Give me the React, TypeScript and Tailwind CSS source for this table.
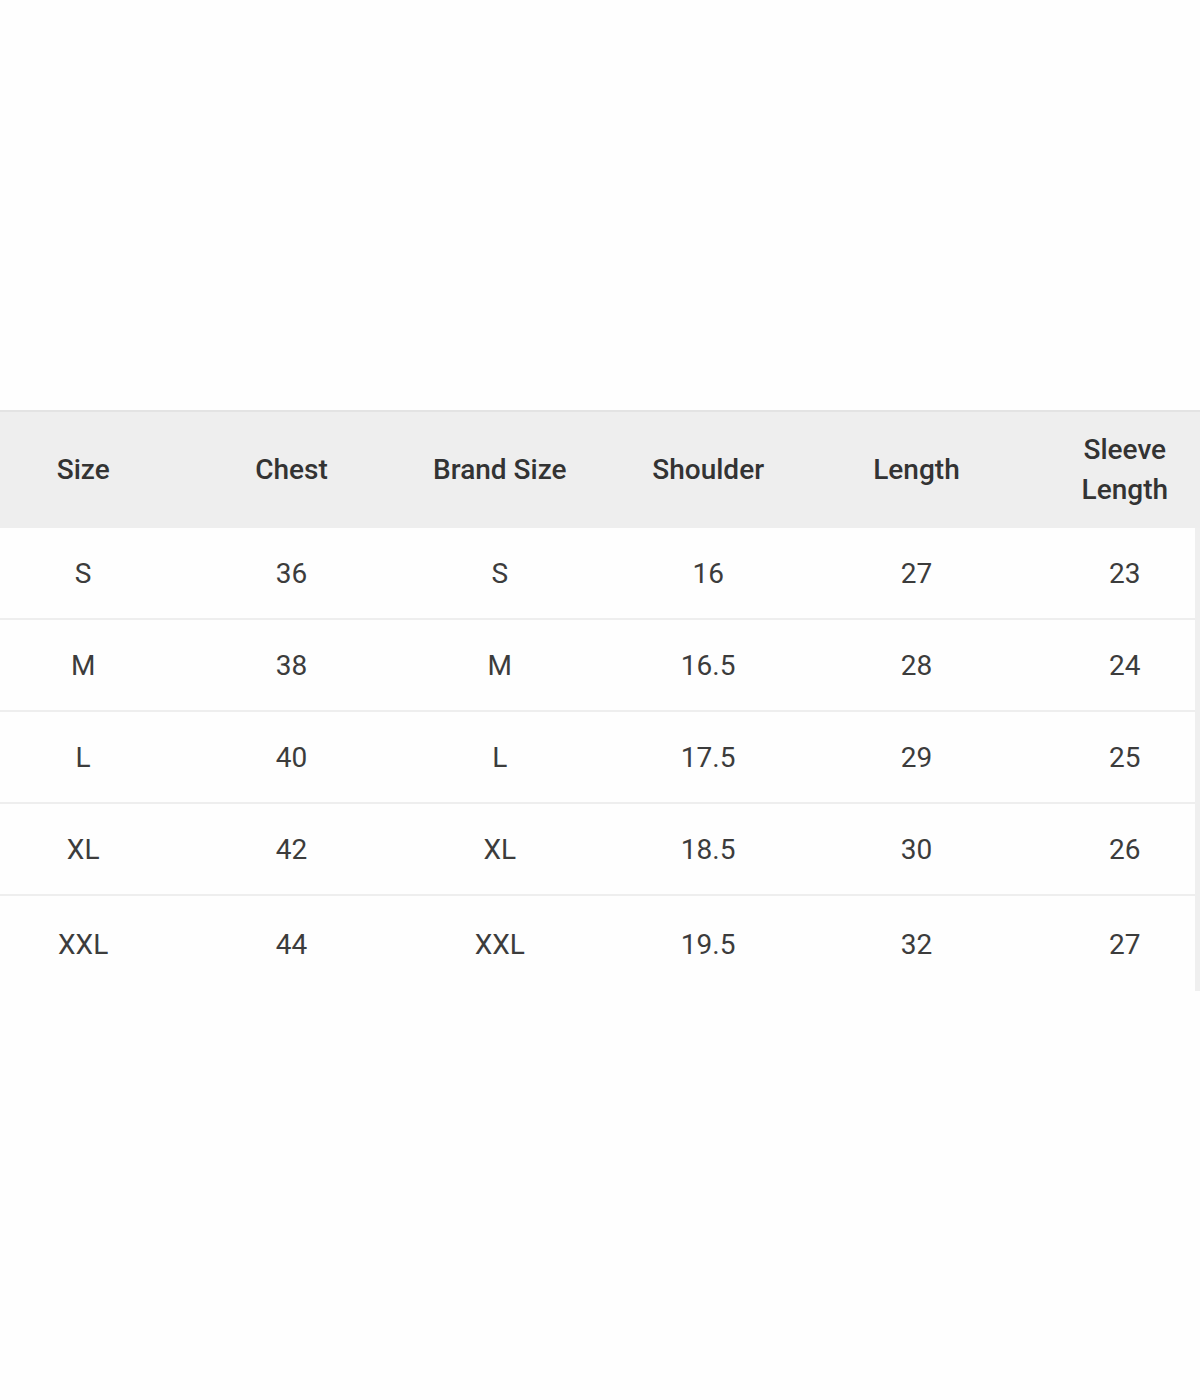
import React from "react";

const headers = ["Size", "Chest", "Brand Size", "Shoulder", "Length", "Sleeve Length"];

const rows = [
  ["S", "36", "S", "16", "27", "23"],
  ["M", "38", "M", "16.5", "28", "24"],
  ["L", "40", "L", "17.5", "29", "25"],
  ["XL", "42", "XL", "18.5", "30", "26"],
  ["XXL", "44", "XXL", "19.5", "32", "27"],
];

const App = () => {
  return (
    <div className="min-h-[1400px] w-[1200px] bg-[#fefefe] pt-[410px] font-['Roboto','Liberation_Sans',sans-serif]">
      {/* header */}
      <div className="w-[1200px] overflow-hidden border-t-2 border-[#e3e3e3] bg-[#eeeeee]">
        <div className="ml-[-21px] grid h-[116px] w-[1250px] grid-cols-6">
          {headers.map((h) => (
            <div
              key={h}
              className={
                "flex items-center justify-center text-center text-[28px] font-medium leading-[40px] text-[#333333] " +
                (h === "Sleeve Length" ? "px-[60px]" : "")
              }
            >
              {h}
            </div>
          ))}
        </div>
      </div>

      {/* body */}
      <div className="w-[1200px] overflow-hidden border-r-[5px] border-[#efefef]">
        <div className="ml-[-21px] w-[1250px]">
          {rows.map((r, i) => (
            <div
              key={i}
              className={
                "grid grid-cols-6 bg-[#fefefe] pt-[2px] " +
                (i < rows.length - 1 ? "h-[92px] border-b-2 border-[#eeeeee]" : "h-[95px]")
              }
            >
              {r.map((c, j) => (
                <div
                  key={j}
                  className="flex items-center justify-center text-[28px] text-[#3c3c3c]"
                >
                  {c}
                </div>
              ))}
            </div>
          ))}
        </div>
      </div>
    </div>
  );
};

export default App;
